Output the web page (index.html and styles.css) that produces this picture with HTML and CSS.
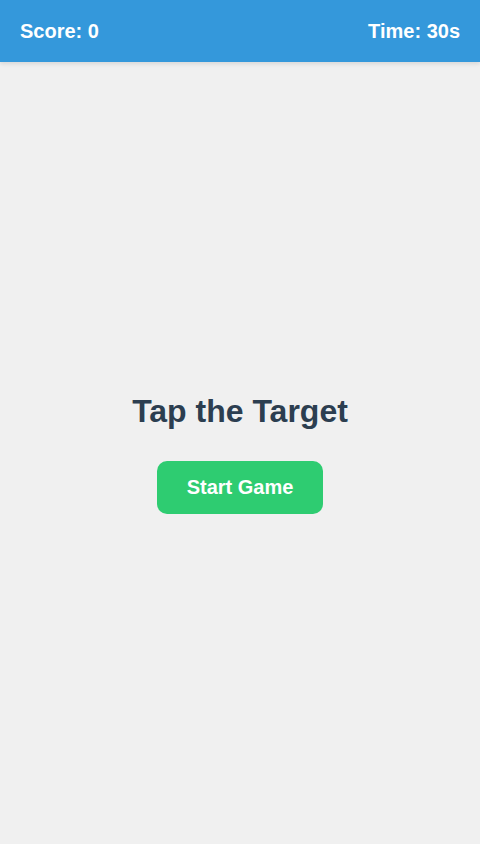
FILE: index.html
```html
<!DOCTYPE html>
<html lang="en">
<head>
<meta charset="utf-8">
<title>Tap the Target</title>
<link rel="stylesheet" href="styles.css">
</head>
<body>
<header class="topbar">
  <div class="stat">Score: 0</div>
  <div class="stat">Time: 30s</div>
</header>
<main class="stage">
  <h1 class="title">Tap the Target</h1>
  <button class="start">Start Game</button>
</main>
</body>
</html>
```
FILE: styles.css
```css
* { box-sizing: border-box; }
html, body { margin: 0; padding: 0; height: 100%; }
body {
  font-family: "Liberation Sans", Arial, sans-serif;
  background: #f0f0f0;
  display: flex;
  flex-direction: column;
}
.topbar {
  height: 62px;
  flex: 0 0 auto;
  background: #3498db;
  color: #fff;
  display: flex;
  justify-content: space-between;
  align-items: center;
  padding: 0 20px;
  box-shadow: 0 2px 4px rgba(0,0,0,0.1);
}
.stat { font-size: 20px; font-weight: bold; }
.stage {
  flex: 1;
  display: flex;
  flex-direction: column;
  align-items: center;
  justify-content: center;
}
.title {
  margin: 0 0 31px;
  font-size: 32px;
  font-weight: bold;
  color: #2c3e50;
}
.start {
  font-family: inherit;
  font-size: 20px;
  font-weight: bold;
  color: #fff;
  background: #2ecc71;
  border: none;
  border-radius: 10px;
  padding: 15px 30px;
  cursor: pointer;
}
```
